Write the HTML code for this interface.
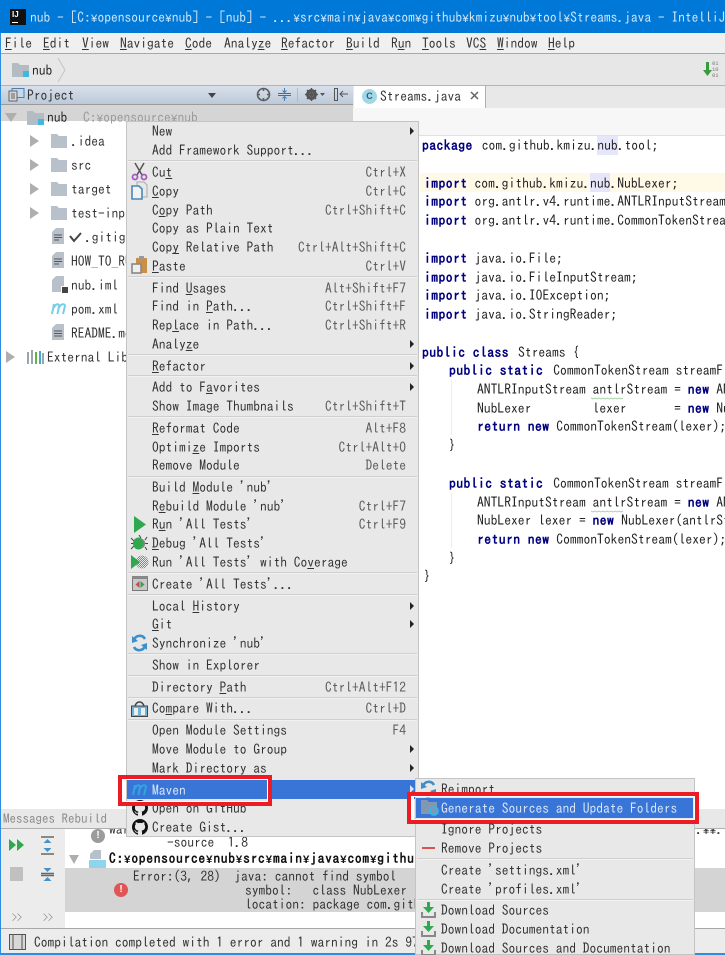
<!DOCTYPE html>
<html><head><meta charset="utf-8"><title>IntelliJ</title>
<style>
html,body{margin:0;padding:0;width:725px;height:955px;overflow:hidden;background:#fff}
body{position:relative;font-family:"IPAGothic","Liberation Mono",monospace;font-size:13.5px;color:#333;filter:blur(.25px)}
.a,.t,.k,.c{position:absolute}
.t,.c,.k{white-space:pre;line-height:18px;height:18px}
.k{text-align:right;right:319px;color:#5c5c5c}
.c{color:#222;font-size:13.6px;right:0;overflow:hidden}
.c b{color:#000080;font-weight:bold;letter-spacing:.45px}
.y{font-family:"Liberation Mono",monospace;font-size:11.25px}
.sep{position:absolute;height:1px;background:#cfcfcf;border-bottom:1px solid #f2f2f2}
.ar{position:absolute;width:0;height:0;border-left:4px solid #222;border-top:4px solid transparent;border-bottom:4px solid transparent}
.tri{position:absolute;width:0;height:0;border-left:9px solid #aeaeae;border-top:6px solid transparent;border-bottom:6px solid transparent}
svg{position:absolute;overflow:visible}
u{text-underline-offset:1px}
</style></head><body>

<!-- title bar -->
<div class="a" style="left:0;top:0;width:725px;height:33px;background:#0078d7"></div>
<div class="a" style="left:10px;top:9px;width:16px;height:16px;background:#111"></div>
<div class="a" style="left:12px;top:10px;color:#fff;font:bold 8px 'Liberation Sans',sans-serif;letter-spacing:0">IJ</div>
<div class="a" style="left:12px;top:22px;width:6px;height:1px;background:#fff"></div>
<div class="t" style="left:30px;top:8px;right:0;overflow:hidden;color:#cfe6f8">nub - [C:<span class="y">¥</span>opensource<span class="y">¥</span>nub] - [nub] - ...<span class="y">¥</span>src<span class="y">¥</span>main<span class="y">¥</span>java<span class="y">¥</span>com<span class="y">¥</span>github<span class="y">¥</span>kmizu<span class="y">¥</span>nub<span class="y">¥</span>tool<span class="y">¥</span>Streams.java - IntelliJ IDEA</div>

<!-- menu bar -->
<div class="a" style="left:1px;top:33px;width:724px;height:20px;background:#f0f0f0;border-bottom:1px solid #a8a8a8"></div>
<div class="t" style="left:5px;top:34px"><u>F</u>ile</div>
<div class="t" style="left:43px;top:34px"><u>E</u>dit</div>
<div class="t" style="left:82px;top:34px"><u>V</u>iew</div>
<div class="t" style="left:120px;top:34px"><u>N</u>avigate</div>
<div class="t" style="left:185px;top:34px"><u>C</u>ode</div>
<div class="t" style="left:224px;top:34px">Analy<u>z</u>e</div>
<div class="t" style="left:281px;top:34px"><u>R</u>efactor</div>
<div class="t" style="left:346px;top:34px"><u>B</u>uild</div>
<div class="t" style="left:391px;top:34px">R<u>u</u>n</div>
<div class="t" style="left:422px;top:34px"><u>T</u>ools</div>
<div class="t" style="left:466px;top:34px">VC<u>S</u></div>
<div class="t" style="left:497px;top:34px"><u>W</u>indow</div>
<div class="t" style="left:548px;top:34px"><u>H</u>elp</div>

<!-- toolbar -->
<div class="a" style="left:1px;top:54px;width:724px;height:31px;background:#e7e7e7"></div>
<svg style="left:12px;top:62px" width="18" height="16"><path d="M0 1h6l2 2h9v12H0z" fill="#b4bcc3"/><rect x="11" y="9" width="6" height="6" fill="#40b6e0"/></svg>
<div class="t" style="left:32px;top:61px;color:#222">nub</div>
<svg style="left:58px;top:57px" width="8" height="26"><path d="M0 1l7 12-7 12" fill="none" stroke="#c4c4c4"/></svg>
<svg style="left:703px;top:61px" width="10" height="16"><path d="M3 1h3v8h3l-4.500 6-4.500-6h3z" fill="#3a9a3e"/></svg>
<div class="a" style="left:712px;top:61px;font:5.500px/6px 'Liberation Mono',monospace;color:#777">01<br>10<br>01</div>

<!-- project header -->
<div class="a" style="left:1px;top:85px;width:352px;height:20px;background:linear-gradient(#d8e0ea,#bcc9d9);border-top:1px solid #a8b4c2;border-bottom:1px solid #9a9a9a;box-sizing:border-box"></div>
<svg style="left:8px;top:88px" width="17" height="14"><rect x="4" y="0.500" width="12" height="9" fill="#c5d9ef" stroke="#4b7fb0"/><rect x="1" y="3" width="8" height="10" fill="#d6d6d6" stroke="#666"/><path d="M3 6h4M3 8h4M3 10h4" stroke="#666"/></svg>
<div class="t" style="left:27px;top:86px;color:#333">Project</div>
<div class="a" style="left:208px;top:93px;width:0;height:0;border-top:5px solid #444;border-left:4px solid transparent;border-right:4px solid transparent"></div>
<svg style="left:256px;top:87px" width="15" height="15"><circle cx="7.500" cy="7.500" r="6" fill="none" stroke="#5e5e5e" stroke-width="1.600"/><path d="M7.500 1v3M7.500 11v3M1 7.500h3M11 7.500h3" stroke="#5e5e5e" stroke-width="1.600"/></svg>
<svg style="left:277px;top:87px" width="15" height="15"><path d="M1 6.500h13M1 8.500h13" stroke="#666"/><path d="M7.500 1v4M5.500 3.500l2 2 2-2M7.500 14v-4M5.500 11.500l2-2 2 2" fill="none" stroke="#4f7ea8"/></svg>
<div class="a" style="left:297px;top:88px;width:1px;height:14px;background:#b0bac6"></div>
<svg style="left:305px;top:88px" width="20" height="13"><circle cx="6.500" cy="6.500" r="4" fill="none" stroke="#555" stroke-width="2.800"/><path d="M6.500 0v13M0 6.500h13M2 2l9 9M11 2l-9 9" stroke="#555" stroke-width="1.500"/><path d="M15 5h5l-2.500 3z" fill="#555"/></svg>
<svg style="left:334px;top:88px" width="14" height="14"><rect x="0.500" y="0.500" width="3" height="12" fill="none" stroke="#555"/><path d="M14 6H6M9 3L6 6l3 3" fill="none" stroke="#555"/></svg>

<!-- editor tabs -->
<div class="a" style="left:353px;top:85px;width:372px;height:22px;background:#e8e8e8;border-top:1px solid #b4b4b4;border-bottom:1px solid #a8a8a8;box-sizing:content-box"></div>
<div class="a" style="left:354px;top:86px;width:131px;height:22px;background:#fff;border-right:1px solid #b0b0b0"></div>
<div class="a" style="left:362px;top:89px;width:15px;height:15px;border-radius:50%;background:#9fd8ea;color:#3a5c6a;font:bold 9px/15px 'Liberation Sans',sans-serif;text-align:center">C</div>
<div class="t" style="left:380px;top:87px;color:#333">Streams.java</div>
<svg style="left:470px;top:91px" width="9" height="9"><path d="M1 1l7 7M8 1L1 8" stroke="#666" stroke-width="1.500"/></svg>

<!-- editor area -->
<div class="a" style="left:353px;top:108px;width:372px;height:27px;background:#f7f7f7;border-bottom:1px solid #e0e0e0"></div>
<div class="a" style="left:420px;top:173px;width:305px;height:19px;background:#fff9e8"></div>
<div class="a" style="left:597px;top:136px;width:21px;height:19px;background:#e6e6fa"></div>
<div class="a" style="left:590px;top:173px;width:20px;height:19px;background:#e6e6fa"></div>

<div class="c" style="left:422px;top:136px"><b>package</b><span style="margin-left:9px"></span>com.github.kmizu.nub.tool;</div>
<div class="c" style="left:424px;top:174px"><b>import</b><span style="margin-left:7px"></span>com.github.kmizu.nub.NubLexer;</div>
<div class="c" style="left:424px;top:192px"><b>import</b><span style="margin-left:7px"></span>org.antlr.v4.runtime.ANTLRInputStream;</div>
<div class="c" style="left:424px;top:211px"><b>import</b><span style="margin-left:7px"></span>org.antlr.v4.runtime.CommonTokenStream;</div>
<div class="c" style="left:424px;top:249px"><b>import</b><span style="margin-left:7px"></span>java.io.File;</div>
<div class="c" style="left:424px;top:268px"><b>import</b><span style="margin-left:7px"></span>java.io.FileInputStream;</div>
<div class="c" style="left:424px;top:286px"><b>import</b><span style="margin-left:7px"></span>java.io.IOException;</div>
<div class="c" style="left:424px;top:305px"><b>import</b><span style="margin-left:7px"></span>java.io.StringReader;</div>
<div class="c" style="left:422px;top:343px"><b>public class</b><span style="margin-left:9px"></span>Streams {</div>
<div class="c" style="left:449px;top:361px"><b>public static</b><span style="margin-left:10px"></span>CommonTokenStream streamFromString</div>
<div class="c" style="left:477px;top:380px">ANTLRInputStream antlrStream = <b>new</b> ANTLRInputStream</div>
<div class="c" style="left:477px;top:399px">NubLexer         lexer       = <b>new</b> NubLexer</div>
<div class="c" style="left:477px;top:417px"><b>return new</b> CommonTokenStream(lexer);</div>
<div class="c" style="left:449px;top:436px">}</div>
<div class="c" style="left:449px;top:474px"><b>public static</b><span style="margin-left:10px"></span>CommonTokenStream streamFromFile</div>
<div class="c" style="left:477px;top:493px">ANTLRInputStream antlrStream = <b>new</b> ANTLRInputStream</div>
<div class="c" style="left:477px;top:511px">NubLexer lexer = <b>new</b> NubLexer(antlrStream);</div>
<div class="c" style="left:477px;top:530px"><b>return new</b> CommonTokenStream(lexer);</div>
<div class="c" style="left:449px;top:549px">}</div>
<div class="c" style="left:424px;top:567px">}</div>
<svg style="left:591px;top:397px" width="36" height="3"><path d="M0 1l2 1 2-1 2 1 2-1 2 1 2-1 2 1 2-1 2 1 2-1 2 1 2-1 2 1 2-1 2 1 2-1" fill="none" stroke="#a9d6a9"/></svg>
<svg style="left:591px;top:510px" width="36" height="3"><path d="M0 1l2 1 2-1 2 1 2-1 2 1 2-1 2 1 2-1 2 1 2-1 2 1 2-1 2 1 2-1 2 1 2-1" fill="none" stroke="#a9d6a9"/></svg>
<div class="a" style="left:451px;top:380px;width:1px;height:55px;background:#ededed"></div>
<div class="a" style="left:451px;top:493px;width:1px;height:55px;background:#ededed"></div>

<!-- project tree -->
<div class="a" style="left:1px;top:105px;width:352px;height:16px;background:#d5d5d5"></div>
<div class="a" style="left:5px;top:113px;width:0;height:0;border-top:9px solid #aeaeae;border-left:6px solid transparent;border-right:6px solid transparent"></div>
<svg style="left:27px;top:110px" width="18" height="16"><path d="M0 1h6l2 2h9v12H0z" fill="#b4bcc3"/><rect x="11" y="9" width="6" height="6" fill="#40b6e0"/></svg>
<div class="t" style="left:47px;top:108px;color:#222">nub</div>
<div class="t" style="left:83px;top:108px;color:#9a9a9a">C:<span class="y">¥</span>opensource<span class="y">¥</span>nub</div>

<div class="tri" style="left:30px;top:135px"></div>
<svg style="left:51px;top:134px" width="16" height="14"><path d="M0 0h6l2 2h8v12H0z" fill="#b8c1c9"/></svg>
<div class="t" style="left:71px;top:132px">.idea</div>
<div class="tri" style="left:30px;top:159px"></div>
<svg style="left:51px;top:158px" width="16" height="14"><path d="M0 0h6l2 2h8v12H0z" fill="#b8c1c9"/></svg>
<div class="t" style="left:71px;top:156px">src</div>
<div class="tri" style="left:30px;top:183px"></div>
<svg style="left:51px;top:182px" width="16" height="14"><path d="M0 0h6l2 2h8v12H0z" fill="#b8c1c9"/></svg>
<div class="t" style="left:71px;top:180px">target</div>
<div class="tri" style="left:30px;top:207px"></div>
<svg style="left:51px;top:206px" width="16" height="14"><path d="M0 0h6l2 2h8v12H0z" fill="#b8c1c9"/></svg>
<div class="t" style="left:71px;top:204px">test-input</div>

<svg style="left:52px;top:228px" width="13" height="17"><path d="M4 0h8v16H0V4z" fill="#b8c1c9"/><path d="M2 7h8M2 9.500h8M2 12h5" stroke="#555"/></svg>
<svg style="left:69px;top:232px" width="13" height="11"><path d="M1 4l4 5 7-8" fill="none" stroke="#444" stroke-width="2"/></svg>
<div class="t" style="left:85px;top:228px">.gitignore</div>
<svg style="left:52px;top:252px" width="13" height="17"><path d="M4 0h8v16H0V4z" fill="#b8c1c9"/><path d="M2 7h8M2 9.500h8M2 12h5" stroke="#555"/></svg>
<div class="t" style="left:71px;top:252px">HOW_TO_RUN</div>
<svg style="left:52px;top:276px" width="16" height="18"><path d="M4 0h8v16H0V4z" fill="#b8c1c9"/><rect x="9" y="10" width="7" height="7" fill="#fff"/><rect x="10" y="11" width="6" height="6" fill="#444"/></svg>
<div class="t" style="left:71px;top:276px">nub.iml</div>
<svg style="left:51px;top:302px" width="16" height="13"><path d="M1 12L3 2M3 6C4 2 8 1 8 4L6.500 12M8 6c1-4 6-5 6-2l-2 8" fill="none" stroke="#78cdea" stroke-width="2"/></svg>
<div class="t" style="left:71px;top:300px">pom.xml</div>
<svg style="left:52px;top:324px" width="13" height="17"><path d="M4 0h8v16H0V4z" fill="#b8c1c9"/><path d="M2 7h8M2 9.500h8M2 12h8" stroke="#555"/></svg>
<div class="t" style="left:71px;top:324px">README.md</div>
<div class="tri" style="left:6px;top:351px"></div>
<svg style="left:27px;top:350px" width="17" height="14"><rect x="0" y="2" width="2" height="12" fill="#9aa5ad"/><rect x="4" y="0" width="2" height="14" fill="#9aa5ad"/><rect x="8" y="2" width="2" height="12" fill="#62b543"/><rect x="12" y="1" width="2" height="13" fill="#40a8d8"/><rect x="15" y="3" width="2" height="11" fill="#9aa5ad"/></svg>
<div class="t" style="left:47px;top:348px">External Libraries</div>

<!-- bottom panel -->
<div class="a" style="left:1px;top:809px;width:724px;height:19px;background:#e8e8e8;border-bottom:1px solid #b0b0b0"></div>
<div class="t" style="left:3px;top:810px;color:#8a8a8a;font-size:13px">Messages Rebuild</div>
<div class="a" style="left:1px;top:829px;width:64px;height:99px;background:#ececec"></div>
<svg style="left:9px;top:838px" width="16" height="14"><path d="M0 1l7 6-7 6zM8 1l7 6-7 6z" fill="#2fa84f"/></svg>
<svg style="left:40px;top:836px" width="15" height="19"><path d="M1 1h13M1 18h13" stroke="#666" stroke-width="1.500"/><path d="M7.500 3l4 4h-8zM7.500 16l4-4h-8z" fill="#4a90c4"/></svg>
<div class="a" style="left:10px;top:867px;width:13px;height:14px;background:#c0c0c0"></div>
<svg style="left:40px;top:865px" width="15" height="19"><path d="M1 8.500h13M1 10.500h13" stroke="#666" stroke-width="1.500"/><path d="M7.500 7l4-4h-8zM7.500 12l4 4h-8z" fill="#4a90c4"/></svg>
<div class="t" style="left:12px;top:909px;color:#888;font-size:10px">&gt;&gt;</div>
<div class="t" style="left:43px;top:909px;color:#888;font-size:10px">&gt;&gt;</div>
<div class="a" style="left:91px;top:829px;width:14px;height:14px;border-radius:50%;background:#9c9c9c;color:#fff;font:bold 10px/14px 'Liberation Sans',sans-serif;text-align:center">!</div>
<div class="a" style="left:109px;top:829px;width:30px;height:7px;overflow:hidden"><div class="t" style="left:0;top:-9px">warning</div></div>
<div class="a" style="left:696px;top:829px;right:0;height:7px;overflow:hidden"><div class="t" style="left:0;top:-9px">.<span class="y">¥</span><span class="y">¥</span>.</div></div>
<div class="t" style="left:167px;top:833px">-source  1.8</div>
<div class="a" style="left:69px;top:855px;width:0;height:0;border-top:9px solid #aeaeae;border-left:5px solid transparent;border-right:5px solid transparent"></div>
<svg style="left:89px;top:850px" width="18" height="18"><path d="M5 0h7v9H1V4z" fill="#b8c1c9"/><rect x="0" y="10" width="17" height="8" fill="#8fd3ee"/></svg>
<div class="t" style="left:109px;top:849px;right:0;overflow:hidden;color:#111;font-weight:bold;letter-spacing:.7px">C:<span class="y">¥</span>opensource<span class="y">¥</span>nub<span class="y">¥</span>src<span class="y">¥</span>main<span class="y">¥</span>java<span class="y">¥</span>com<span class="y">¥</span>github<span class="y">¥</span>kmizu<span class="y">¥</span>nub<span class="y">¥</span>tool<span class="y">¥</span>Streams.java</div>
<div class="a" style="left:65px;top:868px;width:660px;height:44px;background:#d4d4d4"></div>
<div class="a" style="left:114px;top:883px;width:14px;height:14px;border-radius:50%;background:#e05555;color:#fff;font:bold 10px/14px 'Liberation Sans',sans-serif;text-align:center">!</div>
<div class="t" style="left:133px;top:867px">Error:(3, 28)  java: cannot find symbol</div>
<div class="t" style="left:245px;top:881px">symbol:   class NubLexer</div>
<div class="t" style="left:245px;top:895px">location: package com.github.kmizu.nub</div>

<!-- status bar -->
<div class="a" style="left:1px;top:928px;width:724px;height:25px;background:#ececec;border-top:1px solid #a8a8a8;box-sizing:border-box"></div>
<svg style="left:9px;top:934px" width="17" height="16"><rect x="0.500" y="0.500" width="16" height="15" fill="#d8d8d8" stroke="#555"/><path d="M4 0v16M13 0v16" stroke="#555"/></svg>
<div class="t" style="left:34px;top:933px">Compilation completed with 1 error and 1 warning in 2s 97ms</div>

<!-- window borders -->
<div class="a" style="left:0;top:33px;width:1px;height:922px;background:#2b8ee0"></div>
<div class="a" style="left:0;top:953px;width:725px;height:2px;background:#2b8ee0"></div>

<!-- context menu -->
<div class="a" style="left:126px;top:121px;width:293px;height:716px;background:#e8e8e8;border:1px solid #c4c4c4;box-sizing:border-box"></div>
<div class="sep" style="left:128px;top:160px;width:289px"></div>
<div class="sep" style="left:128px;top:276px;width:289px"></div>
<div class="sep" style="left:128px;top:354px;width:289px"></div>
<div class="sep" style="left:128px;top:375px;width:289px"></div>
<div class="sep" style="left:128px;top:416px;width:289px"></div>
<div class="sep" style="left:128px;top:476px;width:289px"></div>
<div class="sep" style="left:128px;top:572px;width:289px"></div>
<div class="sep" style="left:128px;top:594px;width:289px"></div>
<div class="sep" style="left:128px;top:653px;width:289px"></div>
<div class="sep" style="left:128px;top:675px;width:289px"></div>
<div class="sep" style="left:128px;top:697px;width:289px"></div>
<div class="sep" style="left:128px;top:719px;width:289px"></div>

<div class="t" style="left:152px;top:122px">New</div><div class="ar" style="left:410px;top:127px"></div>
<div class="t" style="left:152px;top:141px">Add Framework Support...</div>
<div class="t" style="left:152px;top:163px">Cu<u>t</u></div><div class="k" style="top:163px">Ctrl+X</div>
<div class="t" style="left:152px;top:182px"><u>C</u>opy</div><div class="k" style="top:182px">Ctrl+C</div>
<div class="t" style="left:152px;top:201px">C<u>o</u>py Path</div><div class="k" style="top:201px">Ctrl+Shift+C</div>
<div class="t" style="left:152px;top:219px">Copy as Plain Text</div>
<div class="t" style="left:152px;top:238px">Cop<u>y</u> Relative Path</div><div class="k" style="top:238px">Ctrl+Alt+Shift+C</div>
<div class="t" style="left:152px;top:257px"><u>P</u>aste</div><div class="k" style="top:257px">Ctrl+V</div>
<div class="t" style="left:152px;top:279px">Find <u>U</u>sages</div><div class="k" style="top:279px">Alt+Shift+F7</div>
<div class="t" style="left:152px;top:297px">Find in <u>P</u>ath...</div><div class="k" style="top:297px">Ctrl+Shift+F</div>
<div class="t" style="left:152px;top:316px">Rep<u>l</u>ace in Path...</div><div class="k" style="top:316px">Ctrl+Shift+R</div>
<div class="t" style="left:152px;top:335px">Analy<u>z</u>e</div><div class="ar" style="left:410px;top:340px"></div>
<div class="t" style="left:152px;top:357px"><u>R</u>efactor</div><div class="ar" style="left:410px;top:362px"></div>
<div class="t" style="left:152px;top:378px">Add to F<u>a</u>vorites</div><div class="ar" style="left:410px;top:383px"></div>
<div class="t" style="left:152px;top:397px">Show Image Thumbnails</div><div class="k" style="top:397px">Ctrl+Shift+T</div>
<div class="t" style="left:152px;top:419px"><u>R</u>eformat Code</div><div class="k" style="top:419px">Alt+F8</div>
<div class="t" style="left:152px;top:438px">Optimi<u>z</u>e Imports</div><div class="k" style="top:438px">Ctrl+Alt+O</div>
<div class="t" style="left:152px;top:456px">Remove Module</div><div class="k" style="top:456px">Delete</div>
<div class="t" style="left:152px;top:478px">Build <u>M</u>odule 'nub'</div>
<div class="t" style="left:152px;top:497px">R<u>e</u>build Module 'nub'</div><div class="k" style="top:497px">Ctrl+F7</div>
<div class="t" style="left:152px;top:515px">R<u>u</u>n 'All Tests'</div><div class="k" style="top:515px">Ctrl+F9</div>
<div class="t" style="left:152px;top:534px"><u>D</u>ebug 'All Tests'</div>
<div class="t" style="left:152px;top:553px">Run 'All Tests' with Co<u>v</u>erage</div>
<div class="t" style="left:152px;top:575px">Create 'All Tests'...</div>
<div class="t" style="left:152px;top:597px">Local <u>H</u>istory</div><div class="ar" style="left:410px;top:602px"></div>
<div class="t" style="left:152px;top:615px"><u>G</u>it</div><div class="ar" style="left:410px;top:620px"></div>
<div class="t" style="left:152px;top:634px">Synchronize 'nub'</div>
<div class="t" style="left:152px;top:656px">Show in Explorer</div>
<div class="t" style="left:152px;top:678px">Directory <u>P</u>ath</div><div class="k" style="top:678px">Ctrl+Alt+F12</div>
<div class="t" style="left:152px;top:699px">Co<u>m</u>pare With...</div><div class="k" style="top:699px">Ctrl+D</div>
<div class="t" style="left:152px;top:721px">Open Module Settings</div><div class="k" style="top:721px">F4</div>
<div class="t" style="left:152px;top:740px">Move Module to Group</div><div class="ar" style="left:410px;top:745px"></div>
<div class="t" style="left:152px;top:759px">Mark Directory as</div><div class="ar" style="left:410px;top:764px"></div>
<div class="t" style="left:152px;top:799px">Open on GitHub</div>
<div class="t" style="left:152px;top:818px">Create Gist...</div>

<!-- menu icons -->
<svg style="left:131px;top:163px" width="17" height="18"><path d="M4 0l7 12M13 0L6 12" stroke="#555" stroke-width="1.500" fill="none"/><circle cx="4" cy="14" r="2.500" fill="none" stroke="#a05bc0" stroke-width="1.800"/><circle cx="13" cy="14" r="2.500" fill="none" stroke="#a05bc0" stroke-width="1.800"/></svg>
<svg style="left:131px;top:182px" width="17" height="18"><path d="M6 0h7l3 3v12H6z" fill="#e8e8e8" stroke="#aaa"/><path d="M1 4h7l3 3v10H1z" fill="#f2f2f2" stroke="#4a88b8" stroke-width="1.600"/></svg>
<svg style="left:131px;top:256px" width="17" height="18"><rect x="5" y="2" width="11" height="15" fill="#c98f46"/><rect x="8" y="0" width="5" height="4" fill="#999"/><rect x="1" y="8" width="9" height="9" fill="#eee" stroke="#888" stroke-width="1.600"/></svg>
<svg style="left:133px;top:516px" width="14" height="17"><path d="M1 0l12 8.500L1 17z" fill="#2fa84f"/></svg>
<svg style="left:131px;top:535px" width="17" height="17"><path d="M0 3l3 3M0 8.500h3M0 14l3-3M8 0l2 3M16 2l-2 3M17 8.500h-3M16 15l-2-3" stroke="#444"/><ellipse cx="7.500" cy="8.500" rx="5.500" ry="6" fill="#2fa84f"/><path d="M11 4.500a4.500 4.500 0 010 8" fill="none" stroke="#888" stroke-width="1.500"/></svg>
<svg style="left:131px;top:554px" width="18" height="16"><defs><pattern id="dots" width="2" height="2" patternUnits="userSpaceOnUse"><rect width="1" height="1" fill="#888"/><rect x="1" y="1" width="1" height="1" fill="#888"/></pattern></defs><circle cx="11" cy="8" r="6.500" fill="url(#dots)"/><path d="M0 1l9 7-9 7z" fill="#2fa84f"/></svg>
<svg style="left:132px;top:576px" width="16" height="15"><rect x="0.500" y="0.500" width="15" height="14" fill="#c8c8c8" stroke="#777"/><rect x="0" y="0" width="16" height="3" fill="#888"/><path d="M7.500 5v7L3.500 8.500z" fill="#c05050"/><path d="M8.500 5v7l4-3.500z" fill="#3aa050"/></svg>
<svg style="left:131px;top:634px" width="17" height="18"><path d="M14 5a6 6 0 00-11 1M3 13a6 6 0 0011-1" fill="none" stroke="#3d8fcc" stroke-width="2.600"/><path d="M1 2l0 7 6-2zM16 16l0-7-6 2z" fill="#3d8fcc"/></svg>
<svg style="left:131px;top:700px" width="17" height="17"><path d="M4 7a4.500 5 0 019 0" fill="none" stroke="#444" stroke-width="1.500"/><rect x="0.500" y="6" width="16" height="10.500" fill="#6fb2dc" stroke="#444"/><rect x="3" y="8" width="4" height="7" fill="#eee"/><rect x="10" y="8" width="4" height="7" fill="#eee"/></svg>
<svg style="left:132px;top:800px" width="16" height="16" viewBox="0 0 16 16"><path d="M8 0C3.580 0 0 3.580 0 8c0 3.540 2.290 6.530 5.470 7.590.4.070.55-.17.55-.38 0-.19-.01-.82-.01-1.490-2.010.37-2.530-.49-2.690-.94-.09-.23-.48-.94-.82-1.130-.28-.15-.68-.52-.01-.53.63-.01 1.080.58 1.230.82.72 1.210 1.870.87 2.330.66.07-.52.28-.87.51-1.070-1.780-.2-3.640-.89-3.640-3.950 0-.87.31-1.590.82-2.150-.08-.2-.36-1.020.08-2.120 0 0 .67-.21 2.200.82.64-.18 1.320-.27 2-.27s1.360.09 2 .27c1.530-1.040 2.200-.82 2.200-.82.44 1.100.16 1.920.08 2.120.51.56.82 1.270.82 2.150 0 3.070-1.870 3.750-3.650 3.950.29.25.54.73.54 1.480 0 1.070-.01 1.930-.01 2.200 0 .21.15.46.55.38A8.010 8.010 0 0016 8c0-4.420-3.580-8-8-8z" fill="#111"/></svg>
<svg style="left:132px;top:819px" width="16" height="16" viewBox="0 0 16 16"><path d="M8 0C3.580 0 0 3.580 0 8c0 3.540 2.290 6.530 5.470 7.590.4.070.55-.17.55-.38 0-.19-.01-.82-.01-1.490-2.010.37-2.530-.49-2.690-.94-.09-.23-.48-.94-.82-1.130-.28-.15-.68-.52-.01-.53.63-.01 1.080.58 1.230.82.72 1.210 1.870.87 2.330.66.07-.52.28-.87.51-1.070-1.780-.2-3.640-.89-3.640-3.950 0-.87.31-1.590.82-2.150-.08-.2-.36-1.020.08-2.120 0 0 .67-.21 2.200.82.64-.18 1.320-.27 2-.27s1.360.09 2 .27c1.530-1.040 2.200-.82 2.200-.82.44 1.100.16 1.920.08 2.120.51.56.82 1.270.82 2.150 0 3.070-1.870 3.750-3.650 3.950.29.25.54.73.54 1.480 0 1.070-.01 1.930-.01 2.200 0 .21.15.46.55.38A8.010 8.010 0 0016 8c0-4.420-3.580-8-8-8z" fill="#111"/></svg>

<!-- maven highlight -->
<div class="a" style="left:127px;top:780px;width:288px;height:19px;background:#3875d7"></div>
<svg style="left:132px;top:784px" width="16" height="12"><path d="M1 11L3 1M3 5C4 1 8 0 8 3L6.500 11M8 5c1-4 6-5 6-2l-2 8" fill="none" stroke="#30a5e0" stroke-width="2"/></svg>
<div class="t" style="left:152px;top:781px;color:#d8e6f8">Maven</div>
<div class="a" style="left:118px;top:775px;width:154px;height:31px;border:4px solid #ed1c24;box-sizing:border-box"></div>
<div class="a" style="left:122px;top:779px;width:146px;height:23px;border:1px solid #fff;border-width:1px 1px 1px 3px;box-sizing:border-box"></div>

<!-- submenu -->
<div class="a" style="left:415px;top:778px;width:280px;height:177px;background:#e8e8e8;border:1px solid #c4c4c4;box-sizing:border-box"></div>
<div class="ar" style="left:410px;top:785px;border-left-color:#d8e6f8"></div>
<svg style="left:420px;top:780px" width="17" height="16"><path d="M14 5a6 6 0 00-11 1M3 13a6 6 0 0011-1" fill="none" stroke="#3d8fcc" stroke-width="2.600"/><path d="M1 2l0 7 6-2zM16 16l0-7-6 2z" fill="#3d8fcc"/></svg>
<div class="t" style="left:441px;top:780px">Reimport</div>
<div class="a" style="left:416px;top:798px;width:277px;height:20px;background:#3875d7"></div>
<svg style="left:421px;top:800px" width="19" height="16"><path d="M0 0h6l2 2h8v12H0z" fill="#8298b0"/><circle cx="13" cy="11" r="4" fill="none" stroke="#30b8ee" stroke-width="1.800"/></svg>
<div class="t" style="left:441px;top:799px;color:#d8e6f8">Generate Sources and Update Folders</div>
<div class="a" style="left:407px;top:792px;width:292px;height:32px;border:4px solid #ed1c24;box-sizing:border-box"></div>
<div class="a" style="left:411px;top:796px;width:284px;height:24px;border:1px solid #fff;border-width:1px 1px 1px 3px;box-sizing:border-box"></div>
<div class="t" style="left:441px;top:820px">Ignore Projects</div>
<div class="a" style="left:422px;top:847px;width:13px;height:2px;background:#d9534f"></div>
<div class="t" style="left:441px;top:839px">Remove Projects</div>
<div class="sep" style="left:417px;top:858px;width:276px"></div>
<div class="t" style="left:441px;top:861px">Create 'settings.xml'</div>
<div class="t" style="left:441px;top:880px">Create 'profiles.xml'</div>
<div class="sep" style="left:417px;top:899px;width:276px"></div>
<svg style="left:421px;top:902px" width="15" height="17"><path d="M6 0h3v5h4l-5.500 6L2 5h4z" fill="#2fa84f"/><path d="M1 10v5h13v-5" fill="none" stroke="#888" stroke-width="2"/></svg>
<div class="t" style="left:441px;top:901px">Download Sources</div>
<svg style="left:421px;top:921px" width="15" height="17"><path d="M6 0h3v5h4l-5.500 6L2 5h4z" fill="#2fa84f"/><path d="M1 10v5h13v-5" fill="none" stroke="#888" stroke-width="2"/></svg>
<div class="t" style="left:441px;top:920px">Download Documentation</div>
<div class="a" style="left:416px;top:938px;width:278px;height:17px;overflow:hidden"><svg style="left:5px;top:2px" width="15" height="17"><path d="M6 0h3v5h4l-5.500 6L2 5h4z" fill="#2fa84f"/><path d="M1 10v5h13v-5" fill="none" stroke="#888" stroke-width="2"/></svg><div class="t" style="left:25px;top:1px">Download Sources and Documentation</div></div>
</body></html>
